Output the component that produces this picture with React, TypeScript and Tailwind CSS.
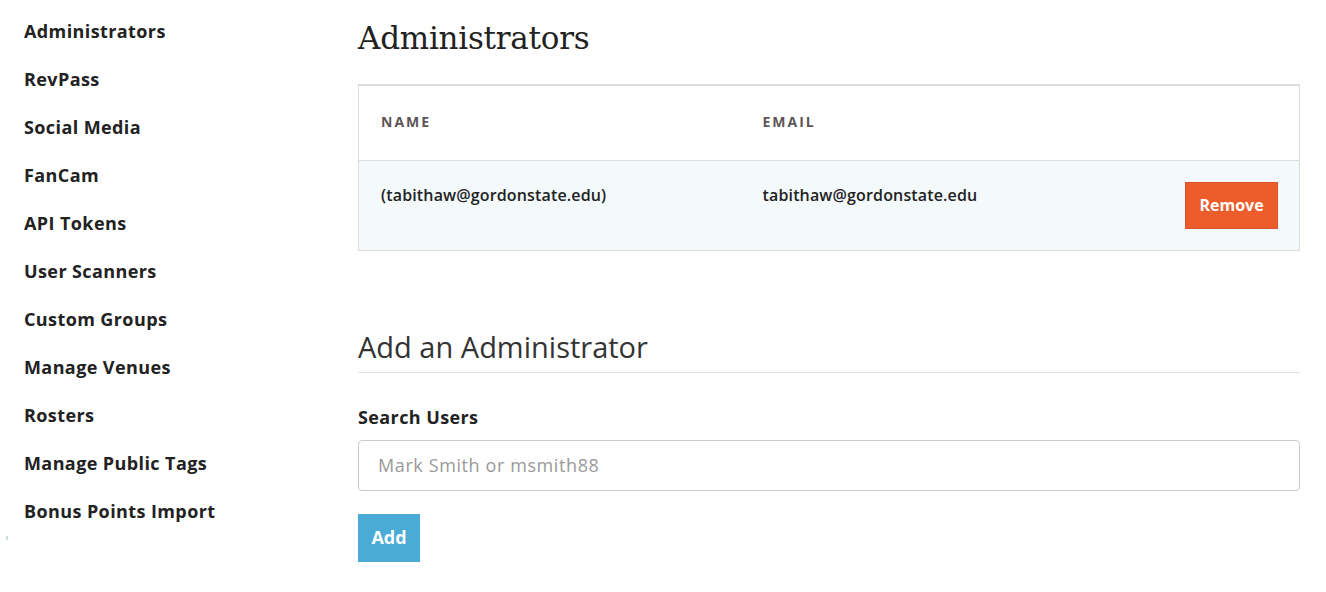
import React, { useState } from "react";

const NAV_ITEMS = [
  "Administrators",
  "RevPass",
  "Social Media",
  "FanCam",
  "API Tokens",
  "User Scanners",
  "Custom Groups",
  "Manage Venues",
  "Rosters",
  "Manage Public Tags",
  "Bonus Points Import",
];

const ADMINS = [
  { name: "(tabithaw@gordonstate.edu)", email: "tabithaw@gordonstate.edu" },
];

export default function App() {
  const [query, setQuery] = useState("");

  return (
    <div className="relative flex min-h-[592px] bg-white font-['Open_Sans','Liberation_Sans',sans-serif] text-[#222]">
      {/* sidebar */}
      <nav className="w-[358px] shrink-0 pl-6 pt-[19px]">
        <ul className="flex flex-col gap-6">
          {NAV_ITEMS.map((item) => (
            <li key={item} className="text-[18px] font-bold leading-6 tracking-[0.4px]">
              {item}
            </li>
          ))}
        </ul>
      </nav>
      <span className="absolute left-[6px] top-[536px] h-1 w-[2px] bg-[#cfdde3]" />

      {/* main */}
      <main className="w-[942px] pt-[18px]">
        <h1 className="font-['DejaVu_Serif',serif] text-[31px] leading-10 tracking-[-0.25px] text-[#222]">
          Administrators
        </h1>

        <table className="mt-[26px] w-full border-collapse border border-t-2 border-[#dcdcdc]">
          <thead>
            <tr className="h-[75px] bg-white">
              <th className="w-[404px] pb-[2px] pl-[22px] text-left text-[14px] font-bold tracking-[2px] text-[#5d5557]">
                NAME
              </th>
              <th className="pb-[2px] text-left text-[14px] font-bold tracking-[2px] text-[#5d5557]">EMAIL</th>
              <th />
            </tr>
          </thead>
          <tbody>
            {ADMINS.map((a) => (
              <tr key={a.email} className="h-[90px] border-t border-[#dcdcdc] bg-[#f4f9fc] align-top">
                <td className="pl-[22px] pt-[22px] text-[16px] font-semibold tracking-[0.15px]">{a.name}</td>
                <td className="pt-[22px] text-[16px] font-semibold tracking-[0.15px]">{a.email}</td>
                <td className="pr-[21px] pt-[21px] text-right">
                  <button className="h-[47px] w-[93px] border border-[#d8542a] bg-[#ec5d2b] text-[16px] font-bold text-white">
                    Remove
                  </button>
                </td>
              </tr>
            ))}
          </tbody>
        </table>

        <h2 className="mt-[78px] border-b border-[#e4e4e4] pb-[7px] text-[29px] leading-9 text-[#333]">
          Add an Administrator
        </h2>

        <label className="mt-[32px] block text-[18px] font-bold leading-6 tracking-[0.4px]">Search Users</label>
        <input
          value={query}
          onChange={(e) => setQuery(e.target.value)}
          placeholder="Mark Smith or msmith88"
          className="mt-[11px] h-[51px] w-full rounded-[4px] border border-[#cccccc] px-[19px] text-[18px] tracking-[0.6px] outline-none placeholder:text-[#9a9a9a]"
        />

        <button className="mt-[23px] h-[48px] w-[62px] bg-[#4aabd6] text-[18px] font-bold text-white">
          Add
        </button>
      </main>
    </div>
  );
}
